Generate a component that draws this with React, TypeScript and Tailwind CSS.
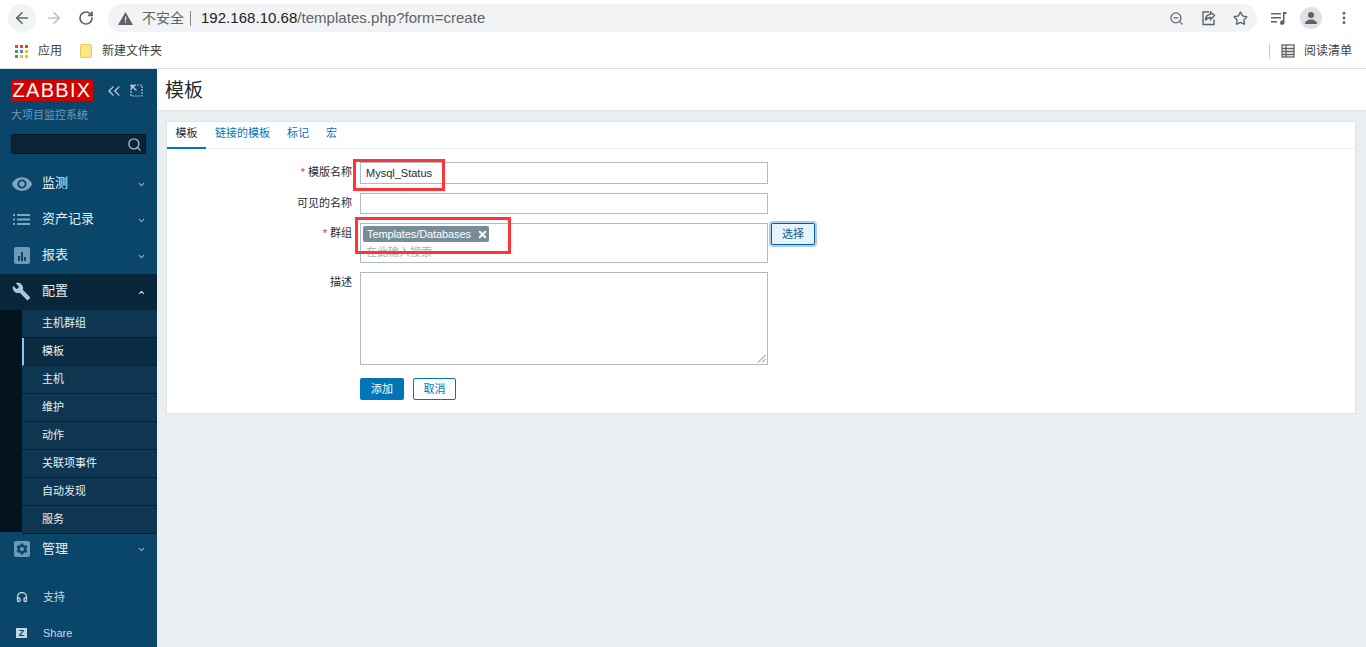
import { ChevronDown, ChevronUp, Search, ChevronsLeft, ArrowLeft, ArrowRight, RotateCw, ZoomOut, Star, MoreVertical, Headphones, X } from 'lucide-react';
import { MdVisibility, MdBuild, MdSettings } from 'react-icons/md';

const FONT = { fontFamily: '"Liberation Sans", "Noto Sans CJK SC", sans-serif' };

const subItems = ['主机群组', '模板', '主机', '维护', '动作', '关联项事件', '自动发现', '服务'];

function MenuRow({ icon, label, open, active, lower }: { icon: React.ReactNode; label: string; open?: boolean; active?: boolean; lower?: boolean }) {
  return (
    <div className={`flex items-center h-9 ${active ? 'bg-[#07263a]' : ''}`}>
      <div className="w-[42px] flex justify-center pl-[1px] pb-[1px] shrink-0">{icon}</div>
      <span className={`flex-1 text-[13px] text-[#e4eef4] ${lower ? 'pb-[1px]' : 'pb-[3px]'}`}>{label}</span>
      {open ? (
        <ChevronUp size={9} strokeWidth={3} className="mr-[11px] text-[#c6d4dc]" />
      ) : (
        <ChevronDown size={9} strokeWidth={3} className="mr-[11px] text-[#8fb0c4]" />
      )}
    </div>
  );
}

function Sidebar() {
  return (
    <aside className="w-[157px] shrink-0 bg-[#0a466a] flex flex-col overflow-hidden">
      <div className="flex items-center pl-[11px] pt-[11px]">
        <div className="w-[82px] h-[21px] bg-[#d40000] text-white text-[20px] leading-[21px] text-center tracking-[1.3px]">ZABBIX</div>
        <ChevronsLeft size={20} strokeWidth={1.5} className="ml-[11px] text-[#c4d4de]" />
        <svg width="13" height="13" viewBox="0 0 13 13" className="ml-[6px] text-[#a9c0ce]" fill="none" stroke="currentColor" strokeWidth="1.2" strokeDasharray="2 1">
          <rect x="1" y="1" width="11" height="11" />
          <path d="M1 1h5l-2 2 3 3-1 1-3-3-2 2z" fill="currentColor" stroke="none" />
        </svg>
      </div>
      <div className="pl-[11px] mt-[6px] text-[11px] leading-[16px] text-[#6f9ab4]">大项目监控系统</div>
      <div className="mx-[11px] mt-[11px] h-[21px] bg-[#0a2436] border border-[#04141f] rounded-[2px] flex items-center justify-end pr-[3px]">
        <Search size={15} strokeWidth={2.2} className="text-[#a5b8c4]" />
      </div>
      <div className="mt-[12px]">
        <MenuRow label="监测" icon={<MdVisibility size={22} className="text-[#7fa6bf]" />} />
        <MenuRow
          label="资产记录"
          icon={
            <svg width="17" height="11" viewBox="0 0 17 11" fill="#7fa6bf">
              <path d="M0 0h2v2H0zM4 0h13v2H4zM0 4.500h2v2H0zM4 4.500h13v2H4zM0 9h2v2H0zM4 9h13v2H4z" />
            </svg>
          }
        />
        <MenuRow
          label="报表"
          icon={
            <svg width="16" height="17" viewBox="0 0 16 17">
              <rect width="16" height="17" rx="2" fill="#6f9ab6" />
              <path d="M4 9h2v5H4zM7 5h2v9H7zM10 10h2v4h-2z" fill="#0a466a" />
            </svg>
          }
        />
        <MenuRow label="配置" active open icon={<MdBuild size={19} className="text-[#a9c6d8]" />} />
      </div>
      <div className="flex h-[222px] bg-[#04141d]">
        <div className="w-[22px] shrink-0" />
        <div className="flex-1">
          {subItems.map((s, i) => (
            <div
              key={s}
              className={`h-[28px] flex items-center pl-[20px] text-[11px] text-[#e9f1f5] border-b border-[#06202f] ${
                i === 1 ? 'bg-[#0a2c42] border-l-2 !pl-[18px] border-l-[#85c8f0]' : 'bg-[#0e3650]'
              }`}
            >
              <span className="-mt-[1px]">{s}</span>
            </div>
          ))}
        </div>
      </div>
      <MenuRow
        lower
        label="管理"
        icon={
          <div className="w-[16px] h-[16px] rounded-[2px] bg-[#6f9ab6] flex items-center justify-center">
            <MdSettings size={14} className="text-[#0a466a]" />
          </div>
        }
      />
      <div className="mt-[12px] flex items-center h-9 pt-[3px]">
        <div className="w-[43px] flex justify-center">
          <Headphones size={12} strokeWidth={2.6} className="text-[#c6d6e0]" />
        </div>
        <span className="text-[11px] text-[#c6dbe8]">支持</span>
      </div>
      <div className="flex items-center h-9 pt-[6px]">
        <div className="w-[43px] flex justify-center">
          <div className="w-[11px] h-[10px] bg-[#c6d6e0] text-[#0a466a] text-[9px] leading-[10px] font-bold text-center">Z</div>
        </div>
        <span className="text-[11px] text-[#c6dbe8]">Share</span>
      </div>
    </aside>
  );
}

function Field({ label, required, children, className }: { label: string; required?: boolean; children: React.ReactNode; className?: string }) {
  return (
    <div className={`flex ${className ?? ''}`}>
      <div className="w-[193px] shrink-0 text-right text-[11px] leading-[20px] text-[#1f2c33] pr-[8px]">
        {required && <span className="text-[#e33734] mr-[3px]">*</span>}
        {label}
      </div>
      {children}
    </div>
  );
}

function TemplateForm() {
  return (
    <div className="relative ml-[9px] mr-[10px] mt-[10px] bg-white border border-[#dfe4e7] h-[293px]">
      <div className="flex h-[27px] border-b border-[#ebeef0] text-[11px] text-[#0275b8]">
        <div className="w-[39px] text-center leading-[23px] text-[#1f2c33] border-b-2 border-[#0275b8] h-[27px]">模板</div>
        <div className="ml-[9px] leading-[23px]">链接的模板</div>
        <div className="ml-[17px] leading-[23px]">标记</div>
        <div className="ml-[17px] leading-[23px]">宏</div>
      </div>
      <div className="pt-[13px]">
        <Field label="模版名称" required>
          <div className="w-[408px] h-[22px] border border-[#acbbc4] pl-[5px] text-[11px] leading-[20px] text-[#1f2c33]">Mysql_Status</div>
        </Field>
        <Field label="可见的名称" className="mt-[9px]">
          <div className="w-[408px] h-[21px] border border-[#acbbc4]" />
        </Field>
        <Field label="群组" required className="mt-[9px]">
          <div className="w-[408px] h-[40px] border border-[#acbbc4] pl-[2px] pt-[2px]">
            <div className="flex items-center w-[126px] h-[16px] bg-[#768d99] rounded-[2px] pl-[4px] text-[11px] text-white">
              <span className="tracking-[-0.1px]">Templates/Databases</span>
              <X size={11} strokeWidth={4.5} className="ml-[6px]" />
            </div>
            <div className="pl-[3px] text-[11px] leading-[18px] mt-[1px] text-[#a8b1b6]">在此输入搜索</div>
          </div>
          <div className="ml-[3px] w-[44px] h-[22px] border border-[#0d5f97] rounded-[2px] bg-[#e5f3fc] shadow-[0_0_0_2px_#a9d0ea] text-[11px] leading-[20px] text-center text-[#1b5a85]">选择</div>
        </Field>
        <Field label="描述" className="mt-[9px]">
          <div className="relative w-[408px] h-[93px] border border-[#acbbc4]">
            <svg width="9" height="9" viewBox="0 0 9 9" className="absolute right-[1px] bottom-[1px]" stroke="#555" strokeWidth="0.8">
              <path d="M1 8.500 8.500 1M5 8.500 8.500 5" />
            </svg>
          </div>
        </Field>
        <div className="flex ml-[193px] mt-[13px] text-[11px] leading-[20px]">
          <div className="w-[44px] h-[22px] bg-[#0275b8] rounded-[2px] text-white text-center leading-[22px]">添加</div>
          <div className="ml-[9px] w-[43px] h-[22px] border border-[#0275b8] rounded-[2px] text-[#0275b8] text-center">取消</div>
        </div>
      </div>
      {/* 标注框 */}
      <div className="absolute left-[186px] top-[37px] w-[92px] h-[32px] border-[3px] border-[#fb3539]" />
      <div className="absolute left-[188px] top-[95px] w-[156px] h-[37px] border-[3px] border-[#fb3539]" />
    </div>
  );
}

function BrowserBar() {
  return (
    <div className="h-[69px] bg-white border-b border-[#dcdfe2] flex flex-col">
      <div className="flex items-center h-[36px]">
        <div className="ml-[8px] w-7 h-7 rounded-full bg-[#f1f3f4] flex items-center justify-center">
          <ArrowLeft size={18} strokeWidth={2.2} className="text-[#5f6368]" />
        </div>
        <ArrowRight size={18} strokeWidth={2.2} className="ml-[9px] text-[#bdc1c6]" />
        <RotateCw size={16} strokeWidth={2.6} className="ml-[15px] text-[#5f6368]" />
        <div className="ml-[14px] w-[1149px] h-7 rounded-full bg-[#f1f3f4] flex items-center pl-[10px]">
          <svg width="15" height="13" viewBox="0 0 15 13"><path d="M7.500 0 15 13H0z" fill="#5f6368" /><path d="M7 4.500h1.200v4H7zM7 9.500h1.200v1.300H7z" fill="#f1f3f4" /></svg>
          <span className="ml-[9px] text-[14px] text-[#5f6368]">不安全</span>
          <span className="ml-[6px] w-px h-[15px] bg-[#80868b]" />
          <span className="ml-[10px] text-[15px] tracking-[0.03px] text-[#202124]">192.168.10.68<span className="text-[#5f6368]">/templates.php?form=create</span></span>
          <div className="ml-auto flex items-center pr-[9px] text-[#5f6368] gap-[17px]">
            <ZoomOut size={15} strokeWidth={2} />
            <svg width="15" height="15" viewBox="0 0 15 15" fill="none" stroke="currentColor" strokeWidth="1.400"><path d="M8 1h-6v12.500h11v-5" /><path d="M13.500 4.500 9.500 1v2.200C6.500 3.500 4.500 6 4.500 9.500c1-2 2.500-3 5-3v2z" /></svg>
            <Star size={15} strokeWidth={2.2} />
          </div>
        </div>
        <div className="flex items-center text-[#5f6368]">
          <svg width="16" height="14" viewBox="0 0 16 14" className="ml-[14px]" fill="currentColor"><path d="M0 2h10v1.500H0zM0 6h10v1.500H0zM0 10h6v1.500H0z" /><path d="M12 1h3.500v2H13.500v8.500a2.200 2.200 0 1 1-1.500-2z" /></svg>
          <div className="ml-[13px] w-[22px] h-[22px] rounded-full bg-[#dee1e6] flex items-center justify-center">
            <svg width="14" height="14" viewBox="0 0 14 14" fill="#5f6368"><circle cx="7" cy="4" r="3" /><path d="M1 13c0-3 3-4.500 6-4.500s6 1.500 6 4.500z" /></svg>
          </div>
          <MoreVertical size={16} strokeWidth={2.4} className="ml-[14px]" />
        </div>
      </div>
      <div className="flex items-center flex-1 text-[12px] text-[#3c4043] pb-[2px]">
        <div className="ml-[15px] grid grid-cols-3 gap-[2px]">
          {['bg-[#ea4335]', 'bg-[#ea4335]', 'bg-[#ea4335]', 'bg-[#34a853]', 'bg-[#4285f4]', 'bg-[#fbbc04]', 'bg-[#34a853]', 'bg-[#fbbc04]', 'bg-[#fbbc04]'].map((c, i) => (
            <span key={i} className={`w-[3px] h-[3px] ${c}`} />
          ))}
        </div>
        <span className="ml-[10px]">应用</span>
        <svg width="12" height="14" viewBox="0 0 12 14" className="ml-[18px]"><rect x="0.500" y="0.500" width="11" height="13" rx="1" fill="#fde68a" stroke="#f2c94c" /></svg>
        <span className="ml-[10px]">新建文件夹</span>
        <div className="ml-auto flex items-center">
          <span className="w-px h-[16px] bg-[#c7c9cc]" />
          <svg width="14" height="14" viewBox="0 0 14 14" className="ml-[11px]" fill="none" stroke="#5f6368" strokeWidth="1.300"><rect x="1" y="1" width="12" height="12" /><path d="M1 4.500h12M1 7.500h12M1 10.500h12M5 1v12" /></svg>
          <span className="ml-[9px] mr-[14px]">阅读清单</span>
        </div>
      </div>
    </div>
  );
}

export default function App() {
  return (
    <div className="w-[1366px] h-[647px] overflow-hidden flex flex-col" style={FONT}>
      <BrowserBar />
      <div className="flex flex-1 min-h-0">
        <Sidebar />
        <main className="flex-1 bg-[#ebeef0]">
          <div className="h-[42px] bg-white border-b border-[#dfe4e7] pl-[8px] text-[19px] leading-[43px] text-[#1f2c33]">模板</div>
          <TemplateForm />
        </main>
      </div>
    </div>
  );
}
